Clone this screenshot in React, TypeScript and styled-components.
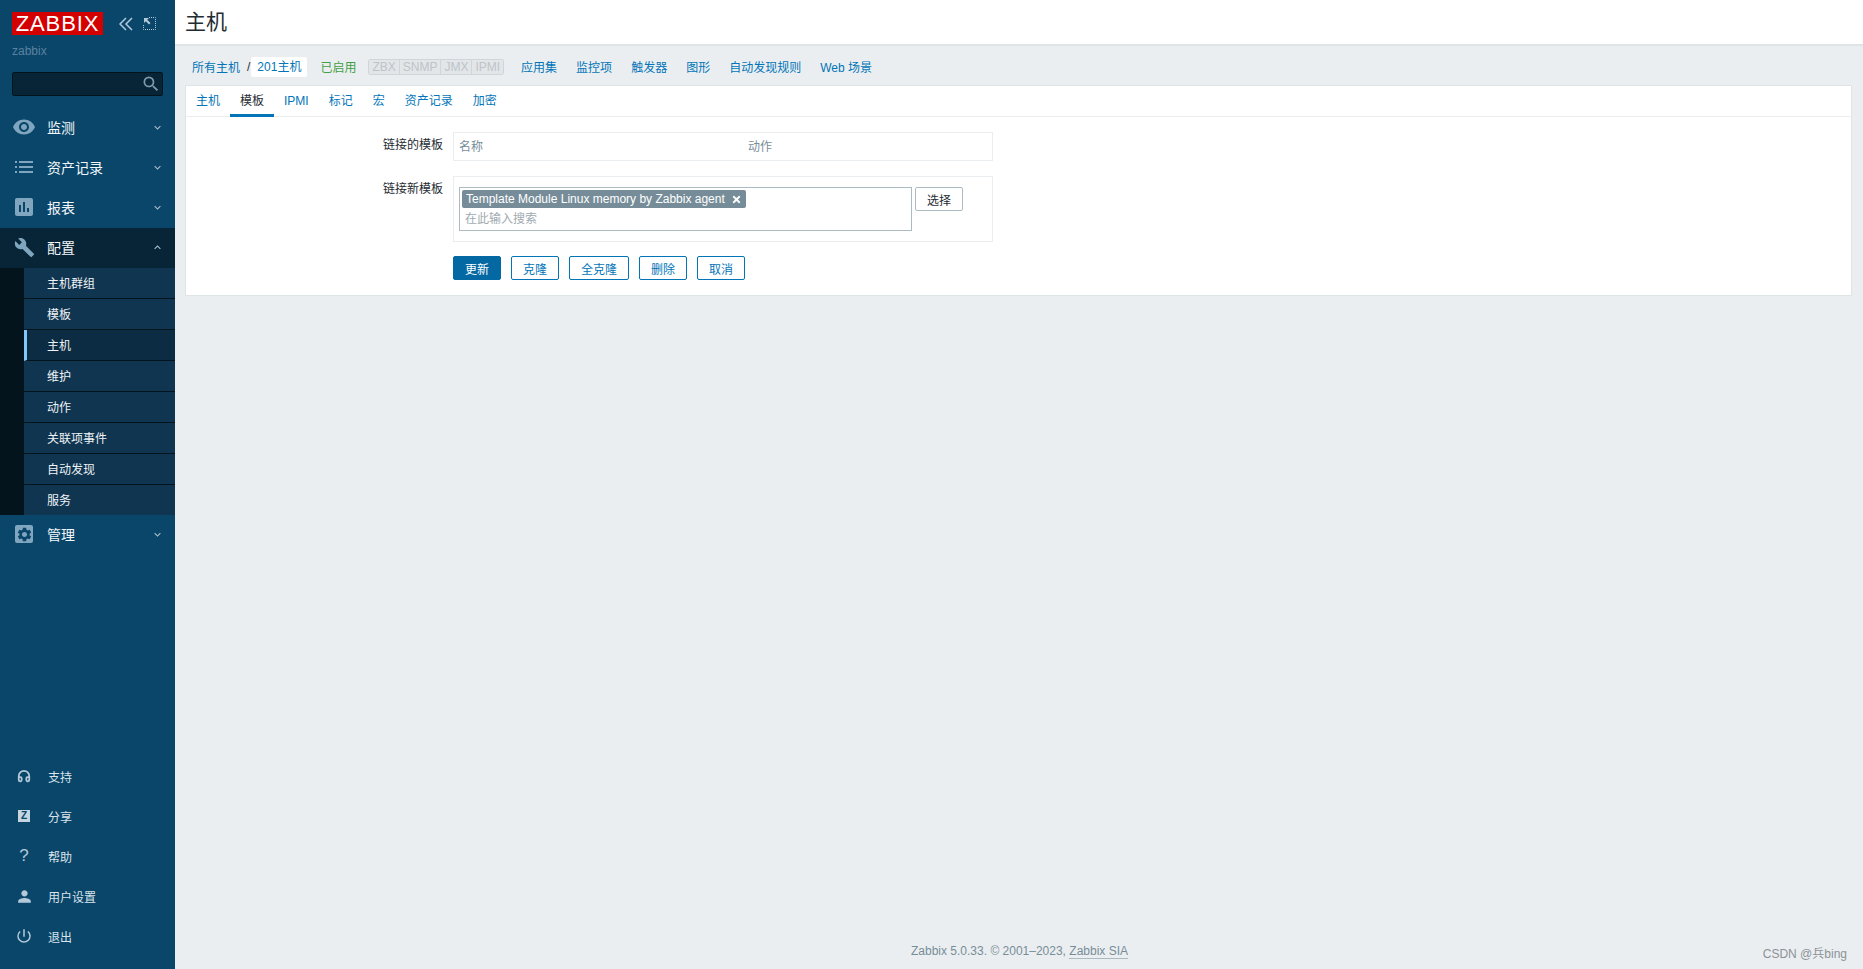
import { ReactNode } from "react";
import styled, { createGlobalStyle } from "styled-components";
import {
  MdAssessment,
  MdBuild,
  MdKeyboardArrowDown,
  MdKeyboardArrowUp,
  MdPerson,
  MdPowerSettingsNew,
  MdSearch,
  MdSettings,
  MdVisibility,
} from "react-icons/md";
import { FaTimes } from "react-icons/fa";
import { LuHeadphones } from "react-icons/lu";

const FONT = `"Liberation Sans", "Noto Sans CJK SC", sans-serif`;

const GlobalStyle = createGlobalStyle`
  html, body { margin: 0; padding: 0; height: 100%; }
  body { font-family: ${FONT}; font-size: 12px; background: #ebeef0; overflow: hidden; }
  * { box-sizing: border-box; }
`;

const Page = styled.div`
  display: flex;
  height: 969px;
  position: relative;
`;

const Sidebar = styled.aside`
  width: 175px;
  flex: none;
  background: #0a466a;
  display: flex;
  flex-direction: column;
`;

const LogoRow = styled.div`
  display: flex;
  align-items: center;
  padding: 12px 0 0 12px;
  height: 35px;
`;

const Logo = styled.div`
  width: 91px;
  height: 23px;
  background: #d40000;
  color: #fff;
  font-size: 22px;
  line-height: 23px;
  letter-spacing: 0.9px;
  text-align: center;
`;

const LogoButtons = styled.div`
  display: flex;
  align-items: center;
  margin-left: 16px;
  gap: 10px;
  color: #b4cadb;
`;

const UserName = styled.div`
  color: #5b82a0;
  font-size: 12px;
  padding: 9px 0 0 12px;
  height: 37px;
`;

const SearchBox = styled.div`
  margin-left: 12px;
  width: 151px;
  height: 24px;
  background: #082537;
  border: 1px solid #04141d;
  border-radius: 2px;
  display: flex;
  align-items: center;
  justify-content: flex-end;
  padding-right: 1px;
  color: #7f9aab;
  font-size: 20px;
`;

const Menu = styled.nav`
  margin-top: 12px;
`;

const MenuItem = styled.div<{ $open?: boolean }>`
  height: 40px;
  display: flex;
  align-items: center;
  padding: 0 0 2px 12px;
  color: #f2f6f9;
  font-size: 14px;
  background: ${(p) => (p.$open ? "#082537" : "transparent")};
`;

const MenuIcon = styled.span<{ $size?: number }>`
  width: 24px;
  height: 24px;
  margin-right: 11px;
  display: flex;
  align-items: center;
  justify-content: center;
  color: #80a6bf;
  font-size: ${(p) => p.$size ?? 24}px;
`;

const GearSquare = styled.span`
  width: 18px;
  height: 18px;
  border-radius: 2px;
  background: #80a6bf;
  color: #0a466a;
  display: flex;
  align-items: center;
  justify-content: center;
  font-size: 17px;
`;

const MenuLabel = styled.span`
  flex: 1;
`;

const Caret = styled.span`
  width: 16px;
  margin-right: 10px;
  display: flex;
  justify-content: center;
  color: #a9c0ce;
  font-size: 13px;
`;

const SubMenu = styled.div`
  background: #04141d;
  padding-left: 24px;
`;

const SubItem = styled.div<{ $active?: boolean }>`
  height: 31px;
  display: flex;
  align-items: center;
  padding: 0 0 1px ${(p) => (p.$active ? "20px" : "23px")};
  border-left: ${(p) => (p.$active ? "3px solid #7fc8ff" : "none")};
  border-bottom: 1px solid #04141d;
  background: ${(p) => (p.$active ? "#0b2c42" : "#0f3550")};
  color: #eef3f7;
  font-size: 12px;
  &:last-child { border-bottom: none; height: 30px; }
`;

const BottomMenu = styled.div`
  margin-top: auto;
  padding-bottom: 13px;
`;

const BottomItem = styled.div`
  height: 40px;
  display: flex;
  align-items: center;
  padding-left: 17px;
  color: #d9e4ec;
  font-size: 12px;
`;

const BottomIcon = styled.span<{ $size?: number }>`
  width: 14px;
  margin-right: 17px;
  display: flex;
  justify-content: center;
  color: #b4cadb;
  font-size: ${(p) => p.$size ?? 15}px;
  svg { flex: none; }
`;

const ZLogo = styled.span`
  width: 12px;
  height: 12px;
  background: #c3d5e0;
  color: #0a466a;
  font-size: 10px;
  font-weight: bold;
  line-height: 12px;
  text-align: center;
`;

const Main = styled.main`
  flex: 1;
  min-width: 0;
  display: flex;
  flex-direction: column;
`;

const Header = styled.header`
  height: 46px;
  background: #fff;
  border-bottom: 2px solid #dfe4e7;
  padding: 10px 0 0 10px;
`;

const Title = styled.h1`
  margin: 0;
  font-size: 21px;
  font-weight: normal;
  line-height: 24px;
  color: #1f2c33;
`;

const Crumbs = styled.div`
  height: 39px;
  display: flex;
  align-items: center;
  padding: 2px 0 0 17px;
`;

const Link = styled.a<{ $flush?: boolean }>`
  color: #0275b8;
  text-decoration: none;
  font-size: 12px;
  margin-right: ${(p) => (p.$flush ? 0 : 19)}px;
`;

const Slash = styled.span`
  color: #1f2c33;
  margin: 0 1px 0 7px;
`;

const CurrentCrumb = styled.a`
  background: #fff;
  color: #0275b8;
  padding: 0 6px;
  height: 20px;
  line-height: 20px;
  border-radius: 2px;
  margin-right: 13px;
`;

const StatusOn = styled.span`
  color: #429e47;
  margin-right: 12px;
`;

const Availability = styled.div`
  display: flex;
  height: 16px;
  border: 1px solid #d0d5d8;
  border-radius: 2px;
  margin-right: 17px;
`;

const AvailabilityCell = styled.span`
  color: #bdc4c8;
  background: #e3e6e8;
  font-size: 12px;
  line-height: 14px;
  padding: 0 3px;
  & + & { border-left: 1px solid #d0d5d8; }
`;

const Card = styled.section`
  margin-right: 11px;
  margin-left: 10px;
  background: #fff;
  border: 1px solid #dfe4e7;
  height: 211px;
`;

const Tabs = styled.div`
  display: flex;
  height: 31px;
  border-bottom: 1px solid #ebeef0;
`;

const Tab = styled.a<{ $active?: boolean }>`
  height: 31px;
  line-height: 31px;
  padding: 0 10px;
  font-size: 12px;
  color: ${(p) => (p.$active ? "#1f2c33" : "#0275b8")};
  border-bottom: 3px solid ${(p) => (p.$active ? "#0275b8" : "transparent")};
`;

const Form = styled.div`
  display: grid;
  grid-template-columns: 267px 540px;
  padding-top: 15px;
  row-gap: 15px;
`;

const FieldLabel = styled.div`
  text-align: right;
  padding: 3px 10px 0 0;
  color: #1f2c33;
`;

const LinkedTable = styled.div`
  height: 29px;
  border: 1px solid #ebeef0;
  display: grid;
  grid-template-columns: 289px 1fr;
  align-items: center;
  padding: 0 0 2px 5px;
  color: #768d99;
`;

const NewTemplates = styled.div`
  height: 66px;
  border: 1px solid #ebeef0;
  display: flex;
  align-items: flex-start;
  padding: 10px 0 0 5px;
  gap: 3px;
`;

const MultiSelect = styled.div`
  width: 453px;
  height: 44px;
  border: 1px solid #acbbc2;
  padding: 2px;
`;

const Chip = styled.span`
  display: inline-flex;
  align-items: center;
  height: 18px;
  background: #768d99;
  color: #fff;
  border-radius: 2px;
  padding: 0 4px;
  font-size: 12px;
  svg { margin-left: 6px; }
`;

const Placeholder = styled.div`
  color: #a0aab0;
  padding: 3px 0 0 3px;
  line-height: 16px;
`;

const SelectButton = styled.button`
  width: 48px;
  height: 24px;
  padding: 0;
  background: #fff;
  border: 1px solid #acbbc2;
  border-radius: 2px;
  color: #1f2c33;
  font-family: ${FONT};
  font-size: 12px;
`;

const Actions = styled.div`
  grid-column: 2;
  display: flex;
  gap: 10px;
  margin-top: -1px;
`;

const ActionButton = styled.button<{ $primary?: boolean }>`
  height: 24px;
  min-width: 48px;
  padding: 0 11px;
  border: 1px solid ${(p) => (p.$primary ? "#0468a3" : "#0275b8")};
  border-radius: 2px;
  background: ${(p) => (p.$primary ? "#0468a3" : "#fff")};
  color: ${(p) => (p.$primary ? "#fff" : "#0275b8")};
  font-family: ${FONT};
  font-size: 12px;
`;

const Footer = styled.footer`
  margin-top: auto;
  height: 25px;
  text-align: center;
  color: #768d99;
  font-size: 12px;
  padding-left: 1px;
`;

const FooterLink = styled.a`
  border-bottom: 1px solid #acbbc2;
`;

const Watermark = styled.div`
  position: absolute;
  right: 16px;
  bottom: 8px;
  color: #8b9297;
  font-size: 12px;
`;

const CollapseIcon = () => (
  <svg width="14" height="14" viewBox="0 0 14 14" fill="none" stroke="#b4cadb" strokeWidth="1.5">
    <path d="M7 1 1 7l6 6" />
    <path d="M13 1 7 7l6 6" />
  </svg>
);

const FullscreenIcon = () => (
  <svg width="13" height="13" viewBox="0 0 13 13" fill="none">
    <path d="M6 .5h6.5V12.5H.5V7" stroke="#b4cadb" strokeDasharray="1 1" />
    <path d="M1 1h5L4.2 2.8 7.5 6 6 7.5 2.8 4.2 1 6z" fill="#b4cadb" />
  </svg>
);

const ListIcon = () => (
  <svg width="18" height="12" viewBox="0 0 18 12" fill="#80a6bf">
    <rect x="0" y="0" width="2" height="2" />
    <rect x="4" y="0" width="14" height="2" />
    <rect x="0" y="5" width="2" height="2" />
    <rect x="4" y="5" width="14" height="2" />
    <rect x="0" y="10" width="2" height="2" />
    <rect x="4" y="10" width="14" height="2" />
  </svg>
);

const mainMenu: { label: string; icon: ReactNode }[] = [
  { label: "监测", icon: <MdVisibility /> },
  { label: "资产记录", icon: <ListIcon /> },
  { label: "报表", icon: <MdAssessment /> },
];

const subMenu = ["主机群组", "模板", "主机", "维护", "动作", "关联项事件", "自动发现", "服务"];

const bottomMenu: { label: string; icon: ReactNode; size?: number }[] = [
  { label: "支持", icon: <LuHeadphones strokeWidth={3} />, size: 14 },
  { label: "分享", icon: <ZLogo>Z</ZLogo> },
  { label: "帮助", icon: "?", size: 17 },
  { label: "用户设置", icon: <MdPerson />, size: 19 },
  { label: "退出", icon: <MdPowerSettingsNew />, size: 18 },
];

const hostLinks = ["应用集", "监控项", "触发器", "图形", "自动发现规则", "Web 场景"];
const hostTabs = ["主机", "模板", "IPMI", "标记", "宏", "资产记录", "加密"];

export default function App() {
  return (
    <Page>
      <GlobalStyle />
      <Sidebar>
        <LogoRow>
          <Logo>ZABBIX</Logo>
          <LogoButtons>
            <CollapseIcon />
            <FullscreenIcon />
          </LogoButtons>
        </LogoRow>
        <UserName>zabbix</UserName>
        <SearchBox>
          <MdSearch />
        </SearchBox>
        <Menu>
          {mainMenu.map((item) => (
            <MenuItem key={item.label}>
              <MenuIcon>{item.icon}</MenuIcon>
              <MenuLabel>{item.label}</MenuLabel>
              <Caret>
                <MdKeyboardArrowDown />
              </Caret>
            </MenuItem>
          ))}
          <MenuItem $open>
            <MenuIcon $size={21}>
              <MdBuild />
            </MenuIcon>
            <MenuLabel>配置</MenuLabel>
            <Caret>
              <MdKeyboardArrowUp />
            </Caret>
          </MenuItem>
          <SubMenu>
            {subMenu.map((label) => (
              <SubItem key={label} $active={label === "主机"}>
                {label}
              </SubItem>
            ))}
          </SubMenu>
          <MenuItem>
            <MenuIcon>
              <GearSquare>
                <MdSettings />
              </GearSquare>
            </MenuIcon>
            <MenuLabel>管理</MenuLabel>
            <Caret>
              <MdKeyboardArrowDown />
            </Caret>
          </MenuItem>
        </Menu>
        <BottomMenu>
          {bottomMenu.map((item) => (
            <BottomItem key={item.label}>
              <BottomIcon $size={item.size}>{item.icon}</BottomIcon>
              {item.label}
            </BottomItem>
          ))}
        </BottomMenu>
      </Sidebar>
      <Main>
        <Header>
          <Title>主机</Title>
        </Header>
        <Crumbs>
          <Link $flush>所有主机</Link>
          <Slash>/</Slash>
          <CurrentCrumb>201主机</CurrentCrumb>
          <StatusOn>已启用</StatusOn>
          <Availability>
            {["ZBX", "SNMP", "JMX", "IPMI"].map((name) => (
              <AvailabilityCell key={name}>{name}</AvailabilityCell>
            ))}
          </Availability>
          {hostLinks.map((label) => (
            <Link key={label}>{label}</Link>
          ))}
        </Crumbs>
        <Card>
          <Tabs>
            {hostTabs.map((label) => (
              <Tab key={label} $active={label === "模板"}>
                {label}
              </Tab>
            ))}
          </Tabs>
          <Form>
            <FieldLabel>链接的模板</FieldLabel>
            <LinkedTable>
              <span>名称</span>
              <span>动作</span>
            </LinkedTable>
            <FieldLabel>链接新模板</FieldLabel>
            <NewTemplates>
              <MultiSelect>
                <Chip>
                  Template Module Linux memory by Zabbix agent
                  <FaTimes size={11} />
                </Chip>
                <Placeholder>在此输入搜索</Placeholder>
              </MultiSelect>
              <SelectButton>选择</SelectButton>
            </NewTemplates>
            <Actions>
              <ActionButton $primary>更新</ActionButton>
              <ActionButton>克隆</ActionButton>
              <ActionButton>全克隆</ActionButton>
              <ActionButton>删除</ActionButton>
              <ActionButton>取消</ActionButton>
            </Actions>
          </Form>
        </Card>
        <Footer>
          Zabbix 5.0.33. © 2001–2023, <FooterLink>Zabbix SIA</FooterLink>
        </Footer>
      </Main>
      <Watermark>CSDN @兵bing</Watermark>
    </Page>
  );
}
